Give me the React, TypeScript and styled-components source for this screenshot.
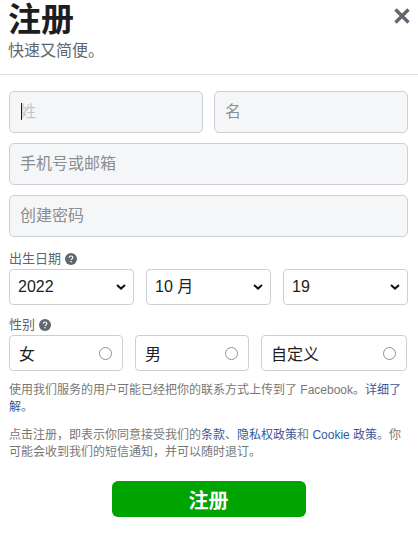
import React from 'react';
import styled, { createGlobalStyle } from 'styled-components';

const FONT = '"Liberation Sans", Arial, "Noto Sans CJK SC", sans-serif';

const GlobalStyle = createGlobalStyle`
  html, body {
    margin: 0;
    padding: 0;
    background: #fff;
  }
  body {
    font-family: ${FONT};
  }
`;

const StyledDialog = styled.div`
  width: 418px;
  height: 543px;
  overflow: hidden;
  position: relative;
`;
const StyledHeader = styled.header`
  height: 75px;
  padding: 0 8px;
  box-sizing: border-box;
  border-bottom: 1px solid #dadde1;
`;
const StyledTitle = styled.h1`
  margin: 0;
  padding-top: 1px;
  font-size: 33px;
  line-height: 38px;
  font-weight: 700;
  color: #1c1e21;
`;
const StyledSubtitle = styled.p`
  margin: 0;
  font-size: 16px;
  line-height: 24px;
  color: #606770;
`;
const StyledClose = styled.button`
  position: absolute;
  top: 7px;
  right: 7px;
  width: 18px;
  height: 18px;
  padding: 0;
  border: 0;
  background: none;
  display: flex;
`;
const StyledForm = styled.form`
  padding: 16px 10px 0 9px;
  display: flex;
  flex-direction: column;
`;
const StyledNameRow = styled.div`
  display: grid;
  grid-template-columns: 194px 194px;
  justify-content: space-between;
  margin-bottom: 10px;
`;
const StyledInput = styled.input<{ $gap?: number }>`
  width: 100%;
  height: 42px;
  box-sizing: border-box;
  padding: 0 10px;
  font-family: ${FONT};
  font-size: 16px;
  color: #1c1e21;
  background: #f5f6f7;
  border: 1px solid #ccd0d5;
  border-radius: 5px;
  outline: none;
  margin-bottom: ${(p) => p.$gap ?? 0}px;
  &::placeholder {
    color: #8a8d91;
    opacity: 1;
  }
`;
const StyledFirstWrap = styled.div`
  position: relative;
`;
const StyledCaret = styled.span`
  position: absolute;
  left: 12px;
  top: 12px;
  width: 1px;
  height: 17px;
  background: #1c1e21;
`;
const StyledFaded = styled(StyledInput)`
  &::placeholder {
    color: #c4c6ca;
  }
`;
const StyledLabel = styled.div<{ $top: number }>`
  display: flex;
  align-items: center;
  gap: 4px;
  height: 16px;
  font-size: 13px;
  line-height: 16px;
  color: #606770;
  margin-top: ${(p) => p.$top}px;
  margin-bottom: 2px;
`;
const StyledSelectRow = styled.div`
  display: grid;
  grid-template-columns: 125px 125px 125px;
  justify-content: space-between;
`;
const StyledSelectBox = styled.div`
  height: 36px;
  box-sizing: border-box;
  border: 1px solid #ccd0d5;
  border-radius: 4px;
  background: #fff;
  padding: 0 7px 0 8px;
  display: flex;
  align-items: center;
  justify-content: space-between;
  font-size: 16px;
  line-height: 20px;
  color: #1c1e21;
`;
const StyledRadioRow = styled.div`
  display: grid;
  grid-template-columns: 114px 114px 146px;
  column-gap: 12px;
`;
const StyledRadioBox = styled.label`
  height: 36px;
  box-sizing: border-box;
  border: 1px solid #ccd0d5;
  border-radius: 4px;
  padding: 0 10px 0 9px;
  display: flex;
  align-items: center;
  justify-content: space-between;
  font-size: 16px;
  color: #1c1e21;
`;
const StyledRadio = styled.span`
  width: 13px;
  height: 13px;
  box-sizing: border-box;
  border: 1px solid #8f8f8f;
  border-radius: 50%;
`;
const StyledNote = styled.p<{ $top: number }>`
  margin: ${(p) => p.$top}px 0 0;
  font-size: 12px;
  line-height: 17px;
  color: #777;
  a {
    color: #385898;
    text-decoration: none;
  }
`;
const StyledSubmitWrap = styled.div`
  display: flex;
  justify-content: center;
  margin-top: 20px;
`;
const StyledSubmit = styled.button`
  width: 194px;
  height: 36px;
  border: 0;
  border-radius: 6px;
  background: #00a400;
  color: #fff;
  font-family: ${FONT};
  font-size: 20px;
  font-weight: 700;
`;

const HelpIcon = () => (
  <svg width="12" height="12" viewBox="0 0 12 12">
    <circle cx="6" cy="6" r="6" fill="#606770" />
    <path d="M4.2 4.6C4.3 3.6 5 3 6 3s1.8.6 1.8 1.5c0 .7-.4 1-.9 1.4-.5.3-.8.6-.8 1.1" fill="none" stroke="#fff" strokeWidth="1.2" />
    <rect x="5.4" y="8" width="1.3" height="1.3" fill="#fff" />
  </svg>
);

const Chevron = () => (
  <svg width="10" height="6" viewBox="0 0 10 6">
    <path d="M1 1l4 3.6L9 1" fill="none" stroke="#111" strokeWidth="2" />
  </svg>
);

const SelectBox = ({ value }: { value: string }) => (
  <StyledSelectBox>
    {value}
    <Chevron />
  </StyledSelectBox>
);

const RadioBox = ({ label }: { label: string }) => (
  <StyledRadioBox>
    {label}
    <StyledRadio />
  </StyledRadioBox>
);

const App = () => {
  return (
    <StyledDialog>
      <GlobalStyle />
      <StyledHeader>
        <StyledTitle>注册</StyledTitle>
        <StyledSubtitle>快速又简便。</StyledSubtitle>
      </StyledHeader>
      <StyledClose type="button" aria-label="关闭">
        <svg width="18" height="18" viewBox="0 0 18 18">
          <path d="M2.5 2.5l13 13M15.5 2.5l-13 13" stroke="#606770" strokeWidth="3.4" />
        </svg>
      </StyledClose>
      <StyledForm>
        <StyledNameRow>
          <StyledFirstWrap>
            <StyledFaded placeholder="姓" />
            <StyledCaret />
          </StyledFirstWrap>
          <StyledInput placeholder="名" />
        </StyledNameRow>
        <StyledInput $gap={10} placeholder="手机号或邮箱" />
        <StyledInput placeholder="创建密码" />
        <StyledLabel $top={14}>
          出生日期
          <HelpIcon />
        </StyledLabel>
        <StyledSelectRow>
          <SelectBox value="2022" />
          <SelectBox value="10 月" />
          <SelectBox value="19" />
        </StyledSelectRow>
        <StyledLabel $top={12}>
          性别
          <HelpIcon />
        </StyledLabel>
        <StyledRadioRow>
          <RadioBox label="女" />
          <RadioBox label="男" />
          <RadioBox label="自定义" />
        </StyledRadioRow>
        <StyledNote $top={11}>
          使用我们服务的用户可能已经把你的联系方式上传到了 Facebook。<a href="#">详细了解</a>。
        </StyledNote>
        <StyledNote $top={11}>
          点击注册，即表示你同意接受我们的<a href="#">条款</a>、<a href="#">隐私权政策</a>和 <a href="#">Cookie 政策</a>。你可能会收到我们的短信通知，并可以随时退订。
        </StyledNote>
        <StyledSubmitWrap>
          <StyledSubmit type="button">注册</StyledSubmit>
        </StyledSubmitWrap>
      </StyledForm>
    </StyledDialog>
  );
};

export default App;
